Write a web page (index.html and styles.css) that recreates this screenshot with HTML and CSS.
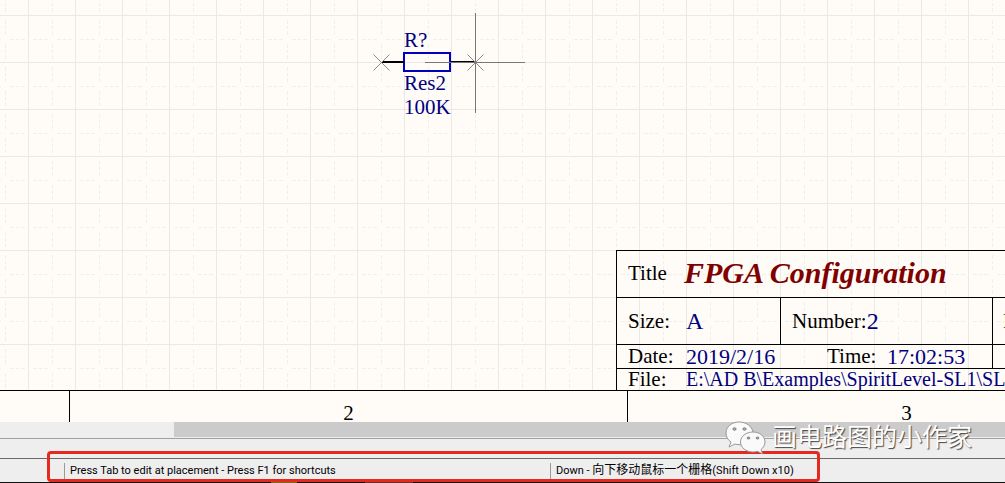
FILE: index.html
```html
<!DOCTYPE html>
<html lang="zh-CN">
<head>
<meta charset="utf-8">
<meta name="viewport" content="width=device-width, initial-scale=1">
<title>FPGA Configuration</title>
<link rel="stylesheet" href="styles.css">
</head>
<body>
<main class="sheet">
  <svg class="grid" aria-hidden="true">
    <defs>
      <pattern id="cells" x="28" y="15" width="47" height="47" patternUnits="userSpaceOnUse">
        <path class="minor" d="M5 24.500h4m2 0h3m2 0h4M29 24.500h4m2 0h3m2 0h4M24.500 5v4m0 2v3m0 2v4M24.500 29v4m0 2v3m0 2v4"/>
        <path class="major" d="M0 .5h47M.5 0v47"/>
      </pattern>
    </defs>
    <rect width="100%" height="100%" fill="url(#cells)"/>
  </svg>
  <div class="part">
    <span class="part-text">R?</span>
    <span class="part-body"></span>
    <span class="part-text">Res2</span>
    <span class="part-text">100K</span>
  </div>
  <svg class="wires" width="160" height="104" viewBox="0 0 160 104" aria-hidden="true">
    <path class="lead" d="M12 52h22M81 52h25"/>
    <path class="cross" d="M3.500 44.500l16 16m0-16l-16 16M97.500 44.500l16 16m0-16l-16 16"/>
    <path class="cursor" d="M55 52.500h100M105.500 3v100"/>
  </svg>
  <section class="title-block">
    <div class="row tall">
      <span class="label">Title</span><h1 class="doc-title">FPGA Configuration</h1>
    </div>
    <div class="row tall">
      <div class="cell size"><span class="label">Size:</span><span class="value big">A</span></div>
      <div class="cell number"><span>Number:</span><span class="value big">2</span></div>
      <div class="cell revision">Revision:</div>
    </div>
    <div class="row date">
      <div class="cell when"><span class="label">Date:</span><span class="value day">2019/2/16</span><span class="time">Time:</span><span class="value">17:02:53</span></div>
      <div class="cell"></div>
    </div>
    <div class="row file">
      <span class="label">File:</span><span class="path">E:\AD B\Examples\SpiritLevel-SL1\SL1</span>
    </div>
  </section>
</main>
<div class="zones"><span></span><span>2</span><span>3</span></div>
<div class="scrollbar"><div class="thumb"></div></div>
<footer class="footer">
  <div class="panel"></div>
  <div class="status">
    <span class="hint">Press Tab to edit at placement - Press F1 for shortcuts</span>
    <span class="hint">Down - <span class="cjk">向下移动鼠标一个栅格</span>(Shift Down x10)</span>
  </div>
  <div class="taskbar"></div>
  <div class="highlight"></div>
  <div class="watermark">
    <svg width="42" height="34" viewBox="0 0 42 34" aria-hidden="true">
      <path class="bubble" d="M14 1C6.500 1 1 6 1 12c0 4 2 7 5 9l-2 5 6-3c2 .6 4 .8 6 .7h4L28 11C27 5 21 1 14 1z"/>
      <path class="bubble" d="M28 11c-7 0-12.500 4.500-12.500 10S21 31 28 31c1.500 0 3-.2 4.500-.7l5 2.700-1.500-4.500c2.500-1.800 4-4.500 4-7.500 0-5.500-5-10-12-10z"/>
      <ellipse class="eye" cx="9.500" cy="8" rx="1.600" ry="1.200"/><ellipse class="eye" cx="19.500" cy="8" rx="1.600" ry="1.200"/>
      <ellipse class="eye" cx="23.500" cy="17" rx="1.400" ry="1"/><ellipse class="eye" cx="32.500" cy="17" rx="1.400" ry="1"/>
    </svg>
    <span>画电路图的小作家</span>
  </div>
</footer>
</body>
</html>
```

FILE: styles.css
```css
* { box-sizing: border-box; }

body {
  margin: 0;
  min-height: 100vh;
  display: flex;
  flex-direction: column;
  overflow: hidden;
  background: #fffcf7;
  color: #000;
  font-family: "Liberation Serif", "Times New Roman", serif;
  font-size: 21px;
}

.sheet {
  position: relative;
  flex: 1;
  display: flex;
  justify-content: flex-end;
  align-items: flex-end;
  overflow: hidden;
  border-bottom: 1px solid #000;
}

.grid { position: absolute; inset: 0; width: 100%; height: 100%; }
.grid path { fill: none; stroke-width: 1; }
.major { stroke: #ebe9e5; }
.minor { stroke: #f1efeb; }

.part {
  position: absolute;
  left: 403px;
  top: 28px;
  display: flex;
  flex-direction: column;
  color: #000080;
}
.part-text { padding-left: 1px; line-height: 24px; }
.part-body { width: 48px; height: 20px; margin-bottom: -1px; border: 2px solid #0000c0; }

.wires { position: absolute; left: 370px; top: 10px; }
.wires path { fill: none; }
.lead { stroke: #000; stroke-width: 2; }
.cross { stroke: #8a8a88; }
.cursor { stroke: #777; }

.title-block {
  position: relative;
  width: 389px;
  border: solid #000;
  border-width: 1px 0 0 1px;
  white-space: nowrap;
  overflow: hidden;
}
.row { display: flex; align-items: center; border-bottom: 1px solid #000; padding-left: 11px; }
.row.tall { height: 47px; padding-bottom: 2px; }
.row.date { height: 24px; }
.row.file { height: 21px; border-bottom: 0; }
.label { width: 58px; flex: none; }
.value { color: #000080; font-size: 22px; }
.value.big { font-size: 24px; }
.path { color: #000080; font-size: 20px; }
.doc-title {
  margin: 0 0 0 -2px;
  font-size: 30px;
  font-style: italic;
  line-height: 34px;
  color: #800000;
}
.cell { display: flex; align-items: center; align-self: stretch; flex: none; }
.size { width: 153px; border-right: 1px solid #000; }
.number { width: 212px; padding-left: 11px; border-right: 1px solid #000; }
.revision { padding-left: 10px; }
.row.tall:has(.cell) { padding-bottom: 0; }
.when { width: 365px; border-right: 1px solid #000; }
.day { width: 141px; }
.time { width: 60px; }

.zones {
  display: grid;
  grid-template-columns: 70px 558px 558px;
  height: 31px;
  overflow: hidden;
  text-align: center;
  line-height: 45px;
}
.zones span { border-right: 1px solid #000; }

.scrollbar { height: 16px; background: #eee; padding-left: 174px; }
.thumb { height: 15px; background: #cbcbcb; }

.footer {
  position: relative;
  font-family: Roboto, "Liberation Sans", "Noto Sans CJK SC", sans-serif;
  background: #eee;
}
.panel { height: 21px; border: solid #a0a0a0; border-width: 1px 0; border-bottom-color: #696969; }
.status { display: flex; height: 23px; padding: 4px 0 2px 64px; font-size: 11px; line-height: 15px; white-space: nowrap; }
.hint { padding-left: 5px; border-left: 1px solid #999; }
.hint:first-child { width: 486px; }
.cjk { font-size: 12px; }
.taskbar { height: 1px; background: linear-gradient(90deg, #111 271px, #777018 271px 297px, #111 297px 365px, #663030 365px 413px, #111 413px); }

.highlight {
  position: absolute;
  left: 47px;
  right: 185px;
  top: 13px;
  bottom: 1px;
  border: 3px solid #e5291e;
  border-radius: 4px;
}

.watermark {
  position: absolute;
  right: 33px;
  top: -17px;
  display: flex;
  align-items: center;
  gap: 5px;
  color: #fff;
  font-size: 25px;
  line-height: 34px;
  text-shadow: 1px 1px 1px #444;
}
.bubble { fill: #fafafa; stroke: #999; stroke-width: 1; }
.eye { fill: #bbb; stroke: #777; stroke-width: 1; }
```
